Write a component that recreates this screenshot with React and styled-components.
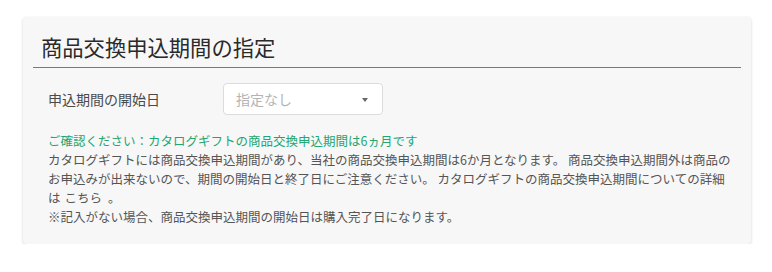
import React from 'react';
import styled, { createGlobalStyle } from 'styled-components';

const GlobalStyle = createGlobalStyle`
  html, body {
    margin: 0;
    padding: 0;
    background: #ffffff;
  }
  body {
    font-family: "Noto Sans CJK JP", "Noto Sans", sans-serif;
  }
`;

const Card = styled.section`
  width: 728px;
  margin: 17px 0 0 23px;
  padding: 0 10px 18px;
  box-sizing: border-box;
  background: #f7f7f7;
  border-radius: 4px;
  box-shadow: 0 1px 3px rgba(0, 0, 0, 0.18);
`;

const Header = styled.div`
  padding: 15px 0 5px 8px;
  border-bottom: 1px solid #7a7a7a;
`;

const Title = styled.h2`
  margin: 0;
  font-size: 21.3px;
  line-height: 30px;
  font-weight: 400;
  color: #2a2a2a;
`;

const Body = styled.div`
  padding: 0 6px 0 15px;
`;

const FormRow = styled.div`
  display: flex;
  align-items: center;
  margin-top: 15px;
`;

const Label = styled.div`
  width: 175px;
  font-size: 14px;
  color: #4a4a4a;
  line-height: 20px;
`;

const Select = styled.div`
  width: 160px;
  height: 32px;
  box-sizing: border-box;
  display: flex;
  align-items: center;
  justify-content: space-between;
  padding: 0 14px 0 12px;
  background: #ffffff;
  border: 1px solid #dcdcdc;
  border-radius: 4px;
`;

const Placeholder = styled.span`
  font-size: 14px;
  color: #b3b3b3;
`;

const Caret = styled.span`
  width: 0;
  height: 0;
  border-left: 3.5px solid transparent;
  border-right: 3.5px solid transparent;
  border-top: 4px solid #666666;
  margin-top: 1px;
`;

const Notes = styled.div`
  margin-top: 16px;
  font-size: 12.5px;
  line-height: 19px;
  color: #555555;
`;

const Notice = styled.p`
  margin: 0;
  color: #22a673;
`;

const Text = styled.p`
  margin: 0;
`;

const Link = styled.span`
  display: inline-block;
  margin: 0 6px 0 4px;
  color: #555555;
`;

export default function App() {
  return (
    <>
      <GlobalStyle />
      <Card>
        <Header>
          <Title>商品交換申込期間の指定</Title>
        </Header>
        <Body>
          <FormRow>
            <Label>申込期間の開始日</Label>
            <Select>
              <Placeholder>指定なし</Placeholder>
              <Caret />
            </Select>
          </FormRow>
          <Notes>
            <Notice>ご確認ください：カタログギフトの商品交換申込期間は6ヵ月です</Notice>
            <Text>
              カタログギフトには商品交換申込期間があり、当社の商品交換申込期間は6か月となります。 商品交換申込期間外は商品のお申込みが出来ないので、期間の開始日と終了日にご注意ください。 カタログギフトの商品交換申込期間についての詳細は
              <Link>こちら</Link>。
            </Text>
            <Text>※記入がない場合、商品交換申込期間の開始日は購入完了日になります。</Text>
          </Notes>
        </Body>
      </Card>
    </>
  );
}
